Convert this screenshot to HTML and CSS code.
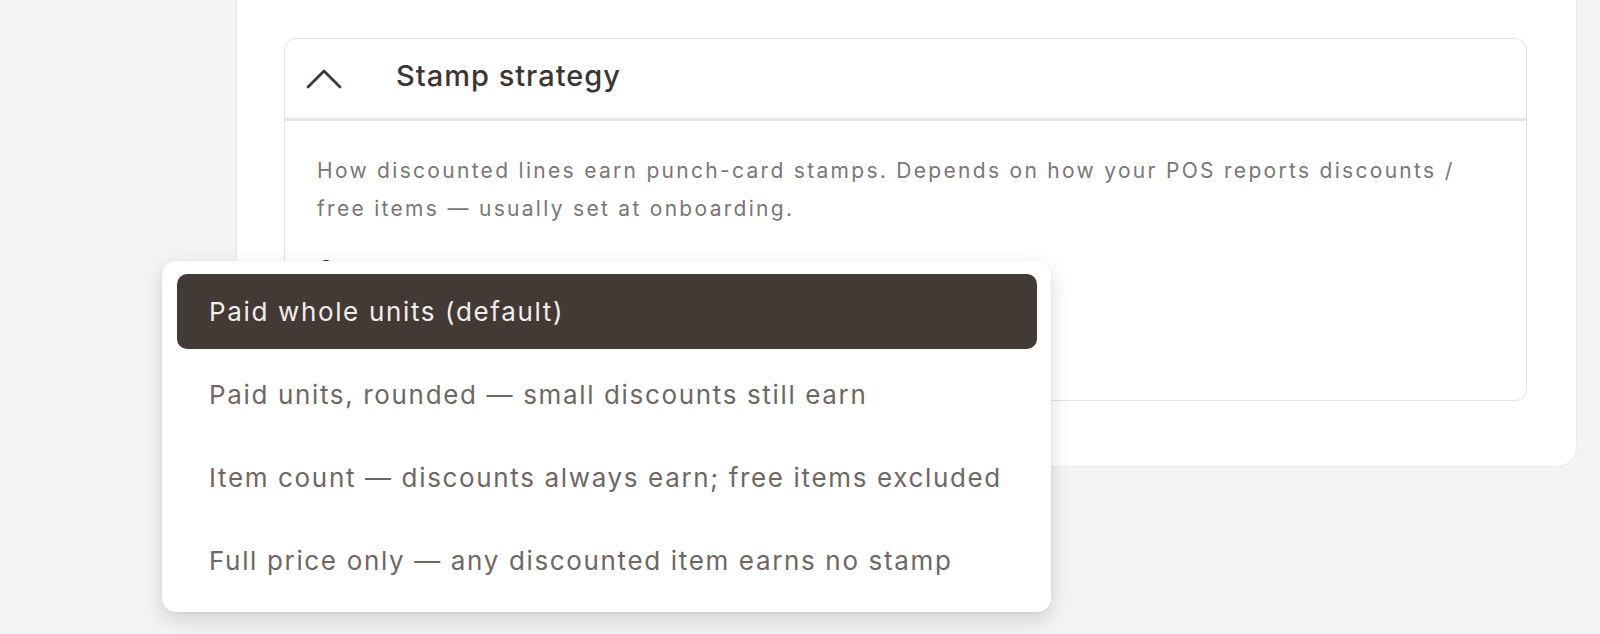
FILE: index.html
```html
<!DOCTYPE html>
<html lang="en">
<head>
<meta charset="utf-8">
<title>Stamp strategy</title>
<link rel="stylesheet" href="styles.css">
</head>
<body>
<div class="page">
  <section class="card">
    <div class="panel">
      <div class="panel-head">
        <svg class="chev" width="36" height="22" viewBox="0 0 36 22" aria-hidden="true">
          <path d="M2 20 L18 4 L34 20" fill="none" stroke="#3f3a38" stroke-width="2.8" stroke-linecap="round" stroke-linejoin="round"/>
        </svg>
        <h2 class="panel-title">Stamp strategy</h2>
      </div>
      <div class="panel-body">
        <p class="desc">How discounted lines earn punch-card stamps. Depends on how your POS reports discounts / free items — usually set at onboarding.</p>
        <div class="field-label">Strategy</div>
      </div>
    </div>
  </section>
  <ul class="menu" role="listbox">
    <li class="opt selected" role="option">Paid whole units (default)</li>
    <li class="opt" role="option">Paid units, rounded — small discounts still earn</li>
    <li class="opt" role="option">Item count — discounts always earn; free items excluded</li>
    <li class="opt" role="option">Full price only — any discounted item earns no stamp</li>
  </ul>
</div>
</body>
</html>
```

FILE: styles.css
```css
html, body {
  margin: 0;
  padding: 0;
}
body {
  background: #f3f4f6;
  font-family: Inter, "Noto Sans", "Liberation Sans", sans-serif;
  width: 1600px;
  height: 634px;
  overflow: hidden;
}
.page {
  position: relative;
  height: 634px;
}
.card {
  margin-left: 236px;
  width: 1341px;
  box-sizing: border-box;
  background: #ffffff;
  border: 1px solid #ebebeb;
  border-top: none;
  border-radius: 0 0 20px 20px;
  padding: 38px 49px 65px 47px;
}
.panel {
  border: 1px solid #e3e3e3;
  border-radius: 12px;
  background: #fff;
}
.panel-head {
  height: 79px;
  display: flex;
  align-items: center;
  padding-left: 21px;
  border-bottom: 3px solid #e6e6e6;
}
.chev {
  display: block;
  margin-bottom: 2px;
}
.panel-title {
  margin: 0 0 6px 54px;
  font-size: 29px;
  font-weight: 500;
  color: #3b3533;
  letter-spacing: 1px;
}
.panel-body {
  height: 248px;
  padding: 31px 60px 0 32px;
}
.desc {
  margin: 0;
  font-size: 21px;
  line-height: 38px;
  color: #7b7675;
  letter-spacing: 2.3px;
}
.field-label {
  margin-top: 29px;
  padding-left: 3px;
  font-size: 18px;
  line-height: 22px;
  font-weight: 600;
  color: #3b3533;
  letter-spacing: 2px;
}
.menu {
  position: absolute;
  left: 162px;
  top: 261px;
  width: 889px;
  box-sizing: border-box;
  margin: 0;
  list-style: none;
  padding: 13px 14px 14px 15px;
  background: #fff;
  border-radius: 14px;
  box-shadow: 0 8px 22px rgba(0, 0, 0, 0.14), 0 1px 3px rgba(0, 0, 0, 0.06);
  display: flex;
  flex-direction: column;
  gap: 8px;
}
.opt {
  height: 75px;
  display: flex;
  align-items: center;
  padding-left: 32px;
  border-radius: 10px;
  font-size: 26px;
  color: #6e6764;
  letter-spacing: 1.65px;
}
.opt.selected {
  background: #433a35;
  color: #f2eeeb;
}
```
